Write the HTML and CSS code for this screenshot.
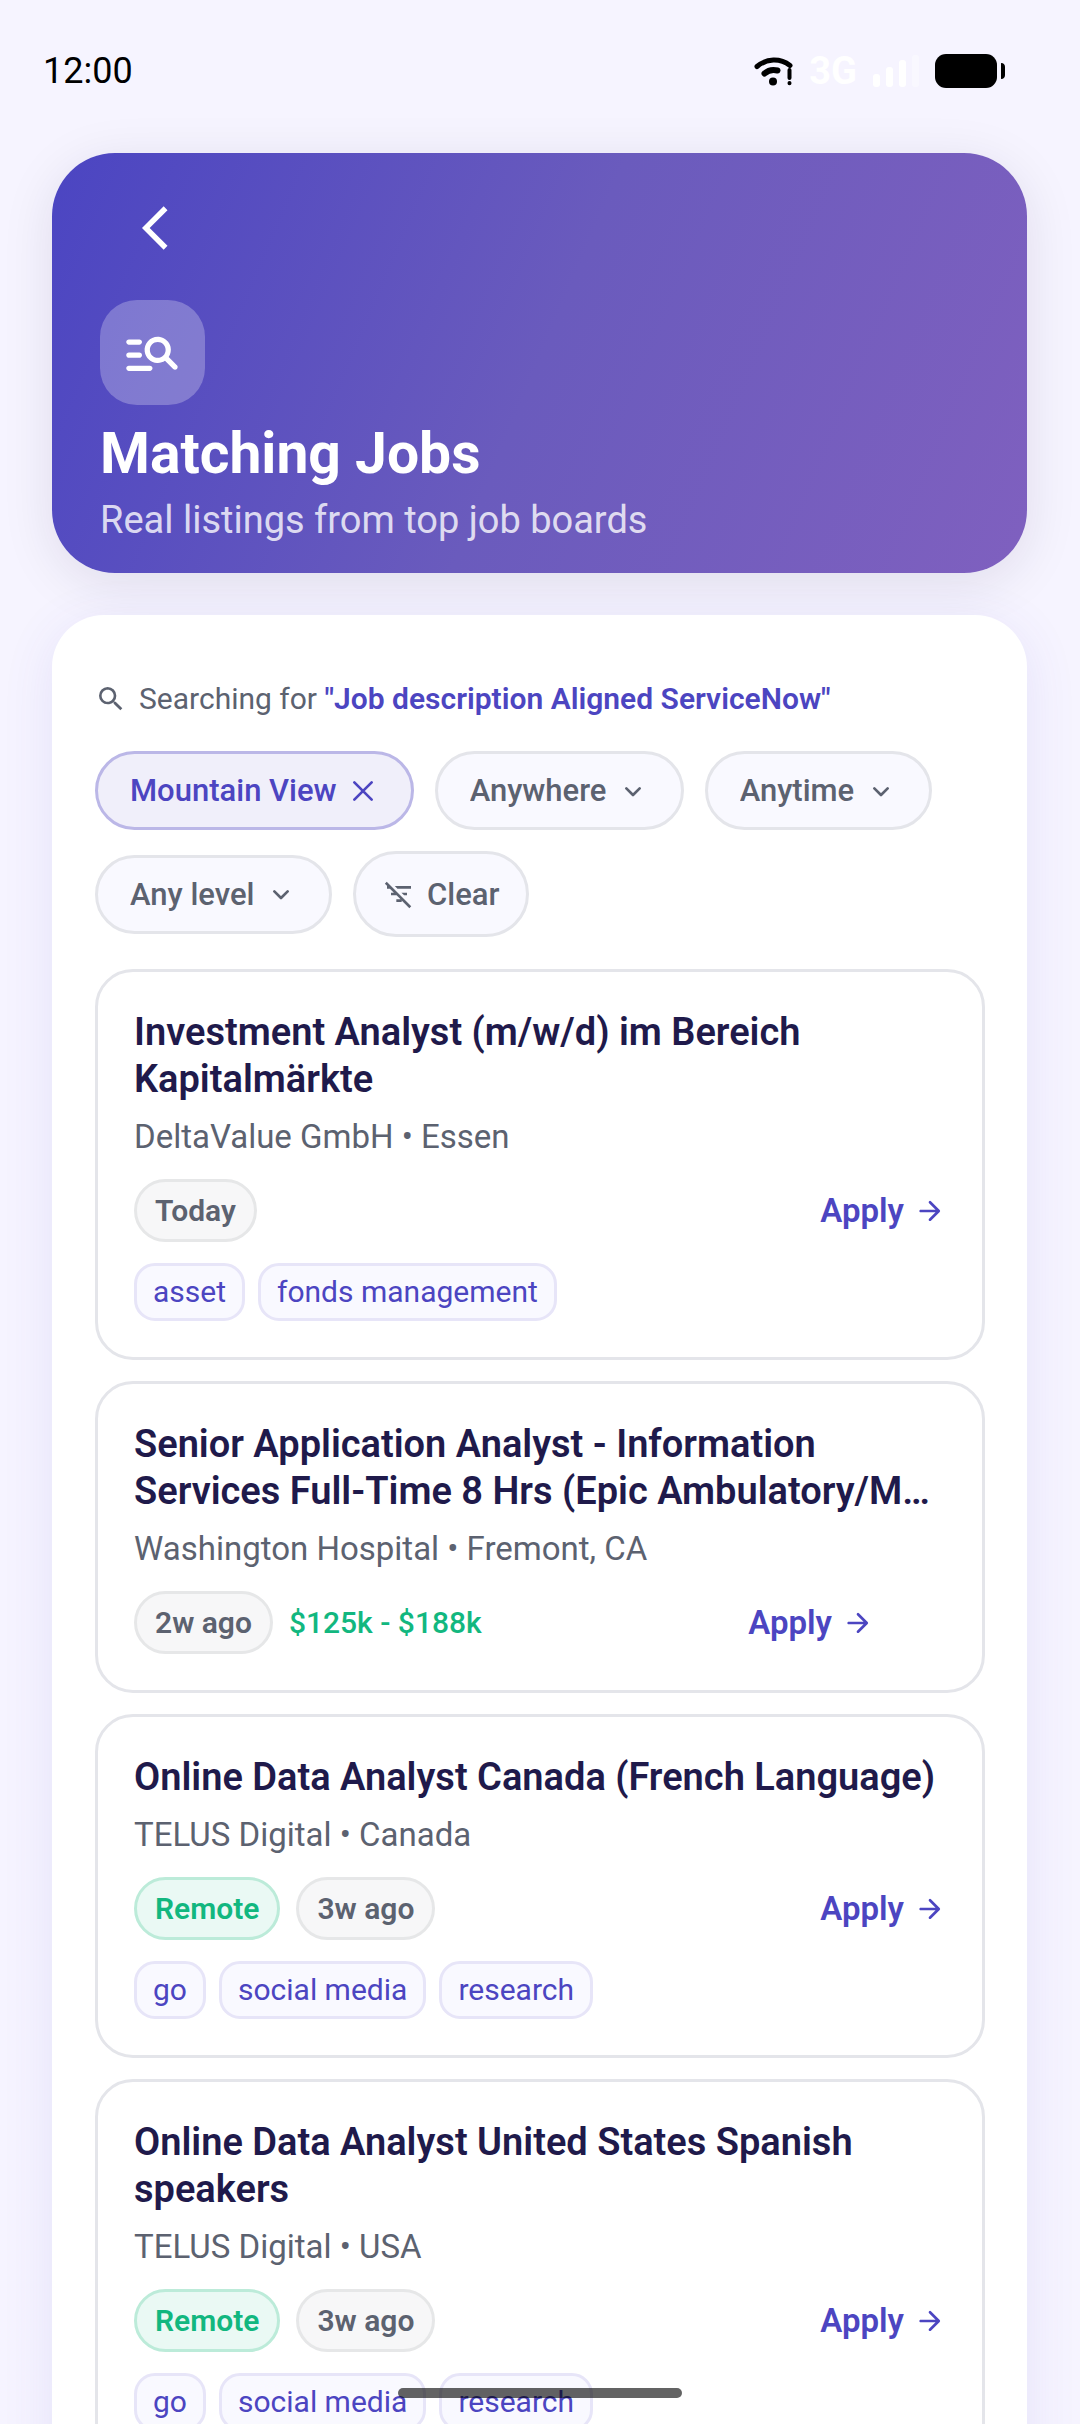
FILE: index.html
```html
<!DOCTYPE html>
<html lang="en">
<head>
<meta charset="utf-8">
<meta name="viewport" content="width=device-width, initial-scale=1">
<title>Matching Jobs</title>
<link rel="stylesheet" href="styles.css">
</head>
<body>
<svg class="sprite" aria-hidden="true">
  <symbol id="chevron" viewBox="0 0 24 24"><path d="M7 10l5 5 5-5" fill="none" stroke="currentColor" stroke-width="2" stroke-linecap="round" stroke-linejoin="round"/></symbol>
  <symbol id="arrow" viewBox="0 0 24 24"><path d="M5 13h11.17l-4.88 4.88c-.39.39-.39 1.03 0 1.42.39.39 1.02.39 1.41 0l6.59-6.59a1 1 0 0 0 0-1.41l-6.58-6.6a.996.996 0 1 0-1.41 1.41L16.17 11H5c-.55 0-1 .45-1 1s.45 1 1 1z" fill="currentColor"/></symbol>
</svg>
<div class="screen">
  <div class="status">
    <span class="status__time">12:00</span>
    <div class="status__icons">
      <svg class="status__wifi" viewBox="0 0 40 32" aria-hidden="true">
        <path d="M4 11.500a26 26 0 0 1 33-1" fill="none" stroke="#000" stroke-width="5" stroke-linecap="round"/>
        <path d="M11.500 18.500a14 14 0 0 1 13-3" fill="none" stroke="#000" stroke-width="6" stroke-linecap="round"/>
        <circle cx="20" cy="26.500" r="4" fill="#000"/>
        <path d="M36.500 15v8M36.500 28v0.200" stroke="#000" stroke-width="4" stroke-linecap="round"/>
      </svg>
      <span class="status__network">3G</span>
      <svg class="status__signal" viewBox="0 0 46 34" aria-hidden="true">
        <g fill="#fff"><rect y="20" width="7" height="13" rx="3"/><rect x="13" y="13" width="7" height="20" rx="3"/><rect x="26" y="6" width="7" height="27" rx="3"/><rect x="39" y="1" width="7" height="32" rx="3" opacity=".4"/></g>
      </svg>
      <svg class="status__battery" viewBox="0 0 70 34" aria-hidden="true"><rect width="62" height="34" rx="11"/><path d="M66 9c3 0 4 2 4 4v8c0 2-1 4-4 4z"/></svg>
    </div>
  </div>

  <header class="hero">
    <button class="hero__back" type="button" aria-label="Back"><svg viewBox="0 0 24 24"><path d="M17.770 3.770 16 2 6 12l10 10 1.770-1.770L9.540 12z" fill="currentColor"/></svg></button>
    <div class="hero__tile"><svg viewBox="0 0 24 24" aria-hidden="true"><path fill="currentColor" d="M7 9H3c-.55 0-1-.45-1-1s.45-1 1-1h4c.55 0 1 .45 1 1s-.45 1-1 1zm0 3H3c-.55 0-1 .45-1 1s.45 1 1 1h4c.55 0 1-.45 1-1s-.45-1-1-1zm12.880 6.290l-3.120-3.120c-.86.56-1.890.88-3 .82-2.370-.11-4.400-1.960-4.720-4.310-.44-3.350 2.450-6.180 5.830-5.610 1.950.33 3.570 1.850 4 3.780.33 1.460.01 2.820-.7 3.900l3.130 3.130c.39.39.39 1.020 0 1.410-.4.39-1.030.39-1.420 0zM17 11c0-1.650-1.350-3-3-3s-3 1.350-3 3 1.350 3 3 3 3-1.350 3-3zM3 19h8c.55 0 1-.45 1-1s-.45-1-1-1H3c-.55 0-1 .45-1 1s.45 1 1 1z"/></svg></div>
    <h1 class="hero__title">Matching Jobs</h1>
    <p class="hero__subtitle">Real listings from top job boards</p>
  </header>

  <main class="panel">
    <p class="query">
      <svg class="icon" viewBox="0 0 24 24" aria-hidden="true"><path fill="currentColor" d="M15.500 14h-.79l-.28-.27A6.470 6.470 0 0 0 16 9.500 6.500 6.500 0 1 0 9.500 16c1.610 0 3.090-.59 4.230-1.570l.27.28v.79l5 4.990L20.490 19l-4.990-5zm-6 0C7.010 14 5 11.990 5 9.500S7.010 5 9.500 5 14 7.010 14 9.500 11.990 14 9.500 14z"/></svg>
      <span>Searching for <strong class="query__term">"Job description Aligned ServiceNow"</strong></span>
    </p>

    <div class="filters">
      <button class="chip chip--active" type="button">Mountain View<svg class="icon" viewBox="0 0 24 24" aria-hidden="true"><path d="M5.500 5.500l13 13M18.500 5.500l-13 13" stroke="currentColor" stroke-width="2" stroke-linecap="round"/></svg></button>
      <label class="chip"><select class="chip__select" aria-label="Workplace"><option>Anywhere</option></select><svg class="icon" aria-hidden="true"><use href="#chevron"/></svg></label>
      <label class="chip"><select class="chip__select" aria-label="Date posted"><option>Anytime</option></select><svg class="icon" aria-hidden="true"><use href="#chevron"/></svg></label>
      <label class="chip"><select class="chip__select" aria-label="Experience level"><option>Any level</option></select><svg class="icon" aria-hidden="true"><use href="#chevron"/></svg></label>
      <button class="chip chip--clear" type="button"><svg class="icon" viewBox="0 0 24 24" aria-hidden="true"><path fill="currentColor" d="M10.830 8H21V6H8.830l2 2zm5 5H18v-2h-4.170l2 2zM14 16.830V18h-4v-2h3.170l-3-3H6v-2h2.170l-3-3H3V6h.17L1.390 4.220 2.800 2.810l18.380 18.380-1.410 1.410L14 16.830z"/></svg>Clear</button>
    </div>

    <div class="jobs">
      <article class="job">
        <h2 class="job__title">Investment Analyst (m/w/d) im Bereich Kapitalmärkte</h2>
        <p class="job__company">DeltaValue GmbH • Essen</p>
        <div class="job__meta">
          <span class="badge">Today</span>
          <a class="apply" href="#apply">Apply<svg class="icon" aria-hidden="true"><use href="#arrow"/></svg></a>
        </div>
        <ul class="tags"><li class="tag">asset</li><li class="tag">fonds management</li></ul>
      </article>

      <article class="job">
        <h2 class="job__title">Senior Application Analyst - Information Services Full-Time 8 Hrs (Epic Ambulatory/M…</h2>
        <p class="job__company">Washington Hospital • Fremont, CA</p>
        <div class="job__meta job__meta--salary">
          <span class="badge">2w ago</span>
          <span class="salary">$125k - $188k</span>
          <a class="apply" href="#apply">Apply<svg class="icon" aria-hidden="true"><use href="#arrow"/></svg></a>
        </div>
      </article>

      <article class="job">
        <h2 class="job__title">Online Data Analyst Canada (French Language)</h2>
        <p class="job__company">TELUS Digital • Canada</p>
        <div class="job__meta">
          <span class="badge badge--remote">Remote</span>
          <span class="badge">3w ago</span>
          <a class="apply" href="#apply">Apply<svg class="icon" aria-hidden="true"><use href="#arrow"/></svg></a>
        </div>
        <ul class="tags"><li class="tag">go</li><li class="tag">social media</li><li class="tag">research</li></ul>
      </article>

      <article class="job">
        <h2 class="job__title">Online Data Analyst United States Spanish speakers</h2>
        <p class="job__company">TELUS Digital • USA</p>
        <div class="job__meta">
          <span class="badge badge--remote">Remote</span>
          <span class="badge">3w ago</span>
          <a class="apply" href="#apply">Apply<svg class="icon" aria-hidden="true"><use href="#arrow"/></svg></a>
        </div>
        <ul class="tags"><li class="tag">go</li><li class="tag">social media</li><li class="tag">research</li></ul>
      </article>
    </div>
  </main>
</div>
<div class="home-indicator"></div>
</body>
</html>
```
FILE: styles.css
```css
:root {
  --primary: #4c45c1;
  --ink: #1f1a4b;
  --muted: #5c6270;
  --line: #e4e5ea;
  --surface: #f9f9ff;
  --success: #12b77f;
}

* { box-sizing: border-box; }

body {
  margin: 0;
  background: #f6f4ff;
  color: var(--muted);
  font-family: Roboto, "Liberation Sans", sans-serif;
  font-size: 32px;
}

h1, h2, p, ul { margin: 0; padding: 0; }
ul { list-style: none; }
button, select { font: inherit; color: inherit; cursor: pointer; }
.sprite { display: none; }
.icon { width: 32px; height: 32px; flex: none; }

.screen {
  height: 100vh;
  overflow-x: hidden;
  overflow-y: auto;
  scrollbar-width: none;
  padding: 0 53px 48px 52px;
}

/* Status bar */
.status {
  display: flex;
  justify-content: space-between;
  align-items: center;
  height: 153px;
  margin: 0 -10px 0 -9px;
  padding: 0 32px 12px 0;
  color: #000;
}
.status__time { font-size: 36px; }
.status__icons { display: flex; align-items: center; gap: 16px; }
.status__wifi { width: 40px; height: 32px; }
.status__network { color: #fff; font-size: 38px; font-weight: 700; line-height: 40px; }
.status__signal { width: 46px; height: 34px; }
.status__battery { width: 70px; height: 34px; }

/* Header card */
.hero {
  padding: 21px 48px 29px;
  border-radius: 63px;
  background: linear-gradient(113deg, #4b45c2, #6a5bbd 50%, #7f60bf);
  box-shadow: 0 10px 52px rgba(30, 20, 60, .1);
  color: #fff;
}
.hero__back {
  display: grid;
  place-items: center;
  width: 110px;
  height: 108px;
  padding: 0;
  border: 0;
  background: none;
}
.hero__back svg { width: 52px; height: 52px; }
.hero__tile {
  display: grid;
  place-items: center;
  width: 105px;
  height: 105px;
  margin-top: 18px;
  border-radius: 37px;
  background: rgba(255, 255, 255, .26);
}
.hero__tile svg { width: 63px; height: 63px; }
.hero__title { margin-top: 13px; font-size: 57px; font-weight: 700; line-height: 72px; }
.hero__subtitle { margin-top: 6px; font-size: 38px; line-height: 48px; color: rgba(255, 255, 255, .8); }

/* Results panel */
.panel {
  margin-top: 42px;
  padding: 63px 42px 63px 43px;
  border-radius: 52px;
  background: #fff;
  box-shadow: 0 10px 52px rgba(76, 69, 193, .1);
}
.query { display: flex; align-items: center; gap: 12px; font-size: 30px; line-height: 42px; }
.query__term { color: var(--primary); font-weight: 600; }

.filters { display: flex; flex-wrap: wrap; align-items: center; gap: 21px; margin-top: 31px; }
.chip {
  display: flex;
  align-items: center;
  gap: 10px;
  height: 79px;
  padding: 0 32px;
  border: 3px solid var(--line);
  border-radius: 43px;
  background: var(--surface);
  color: var(--muted);
  font-size: 31px;
  font-weight: 500;
}
.chip--active { border-color: #bbb7e7; background: #f0effa; color: var(--primary); }
.chip--clear { height: 86px; padding: 0 27px; gap: 12px; }
.chip__select { appearance: none; margin: 0; padding: 0; border: 0; outline: 0; background: none; }

/* Job cards */
.jobs { display: grid; gap: 21px; margin-top: 32px; }
.job { padding: 37px 36px 36px; border: 3px solid var(--line); border-radius: 38px; }
.job__title { color: var(--ink); font-size: 38px; font-weight: 600; line-height: 47px; }
.job__company { margin-top: 11px; font-size: 33px; line-height: 45px; }
.job__meta { display: flex; align-items: center; gap: 16px; margin-top: 20px; }
.job__meta--salary { padding-right: 72px; }
.badge {
  height: 63px;
  padding: 0 18px;
  border: 3px solid #e6e7e8;
  border-radius: 32px;
  background: #f7f7f8;
  font-size: 30px;
  font-weight: 600;
  line-height: 57px;
}
.badge--remote { border-color: #bcebd9; background: #eaf9f4; color: var(--success); }
.salary { color: var(--success); font-size: 30px; font-weight: 500; }
.apply {
  display: flex;
  align-items: center;
  gap: 10px;
  margin-left: auto;
  color: var(--primary);
  font-size: 33px;
  font-weight: 600;
  text-decoration: none;
}
.tags { display: flex; flex-wrap: wrap; gap: 13px; margin-top: 21px; }
.tag {
  height: 58px;
  padding: 0 16px;
  border: 3px solid #e7e5f8;
  border-radius: 21px;
  background: var(--surface);
  color: var(--primary);
  font-size: 30px;
  line-height: 52px;
}

.home-indicator {
  position: fixed;
  left: 50%;
  bottom: 26px;
  width: 284px;
  height: 10px;
  margin-left: -142px;
  border-radius: 5px;
  background: rgba(0, 0, 0, .61);
}
```
